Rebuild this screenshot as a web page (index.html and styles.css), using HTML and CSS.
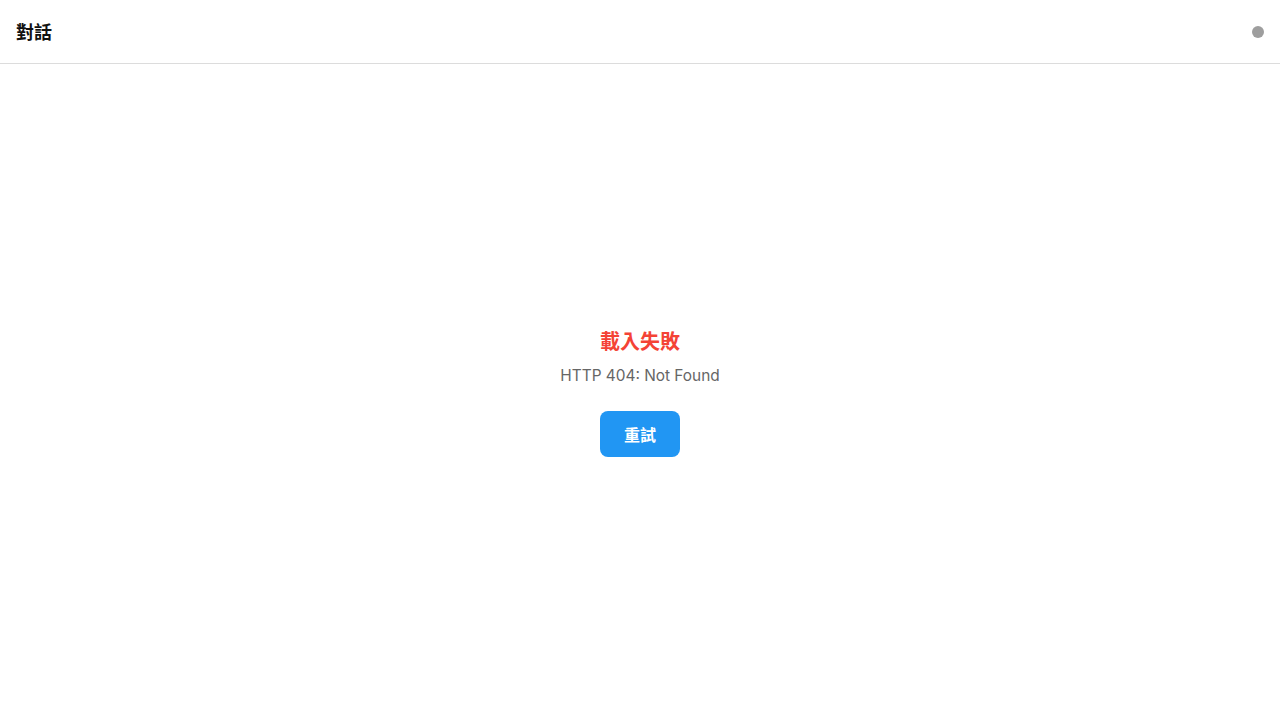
FILE: index.html
```html
<!DOCTYPE html>
<html lang="zh-Hant">
<head>
<meta charset="utf-8">
<title>對話</title>
<link rel="stylesheet" href="styles.css">
</head>
<body>
<div class="app">
  <header class="header">
    <h1 class="title">對話</h1>
    <span class="status-dot"></span>
  </header>
  <main class="content">
    <div class="error">
      <div class="error-title">載入失敗</div>
      <div class="error-msg">HTTP 404: Not Found</div>
      <button class="retry">重試</button>
    </div>
  </main>
</div>
</body>
</html>
```
FILE: styles.css
```css
* { box-sizing: border-box; }
html, body { margin: 0; padding: 0; height: 100%; }
body {
  font-family: Inter, "Noto Sans CJK TC", sans-serif;
  background: #ffffff;
  color: #111;
}
.app { display: flex; flex-direction: column; height: 100vh; }
.header {
  height: 64px;
  border-bottom: 1px solid #dcdcdc;
  display: flex;
  align-items: center;
  justify-content: space-between;
  padding: 0 16px;
  flex-shrink: 0;
}
.title {
  margin: 0;
  font-size: 18px;
  font-weight: 700;
  line-height: 1;
  padding-top: 2px;
}
.status-dot {
  width: 12px;
  height: 12px;
  border-radius: 50%;
  background: #9e9e9e;
}
.content {
  flex: 1;
  display: flex;
  align-items: center;
  justify-content: center;
  padding-top: 2px;
}
.error {
  display: flex;
  flex-direction: column;
  align-items: center;
  text-align: center;
}
.error-title {
  color: #f44336;
  font-size: 20px;
  font-weight: 700;
  line-height: 24px;
  padding-top: 1px;
}
.error-msg {
  color: #666;
  font-size: 15.4px;
  line-height: 24px;
  margin-top: 10px;
}
.retry {
  margin-top: 23px;
  width: 80px;
  height: 46px;
  border: none;
  border-radius: 8px;
  background: #2196f3;
  color: #fff;
  font-family: Inter, "Noto Sans CJK TC", sans-serif;
  font-size: 16px;
  font-weight: 700;
  cursor: pointer;
}
```
